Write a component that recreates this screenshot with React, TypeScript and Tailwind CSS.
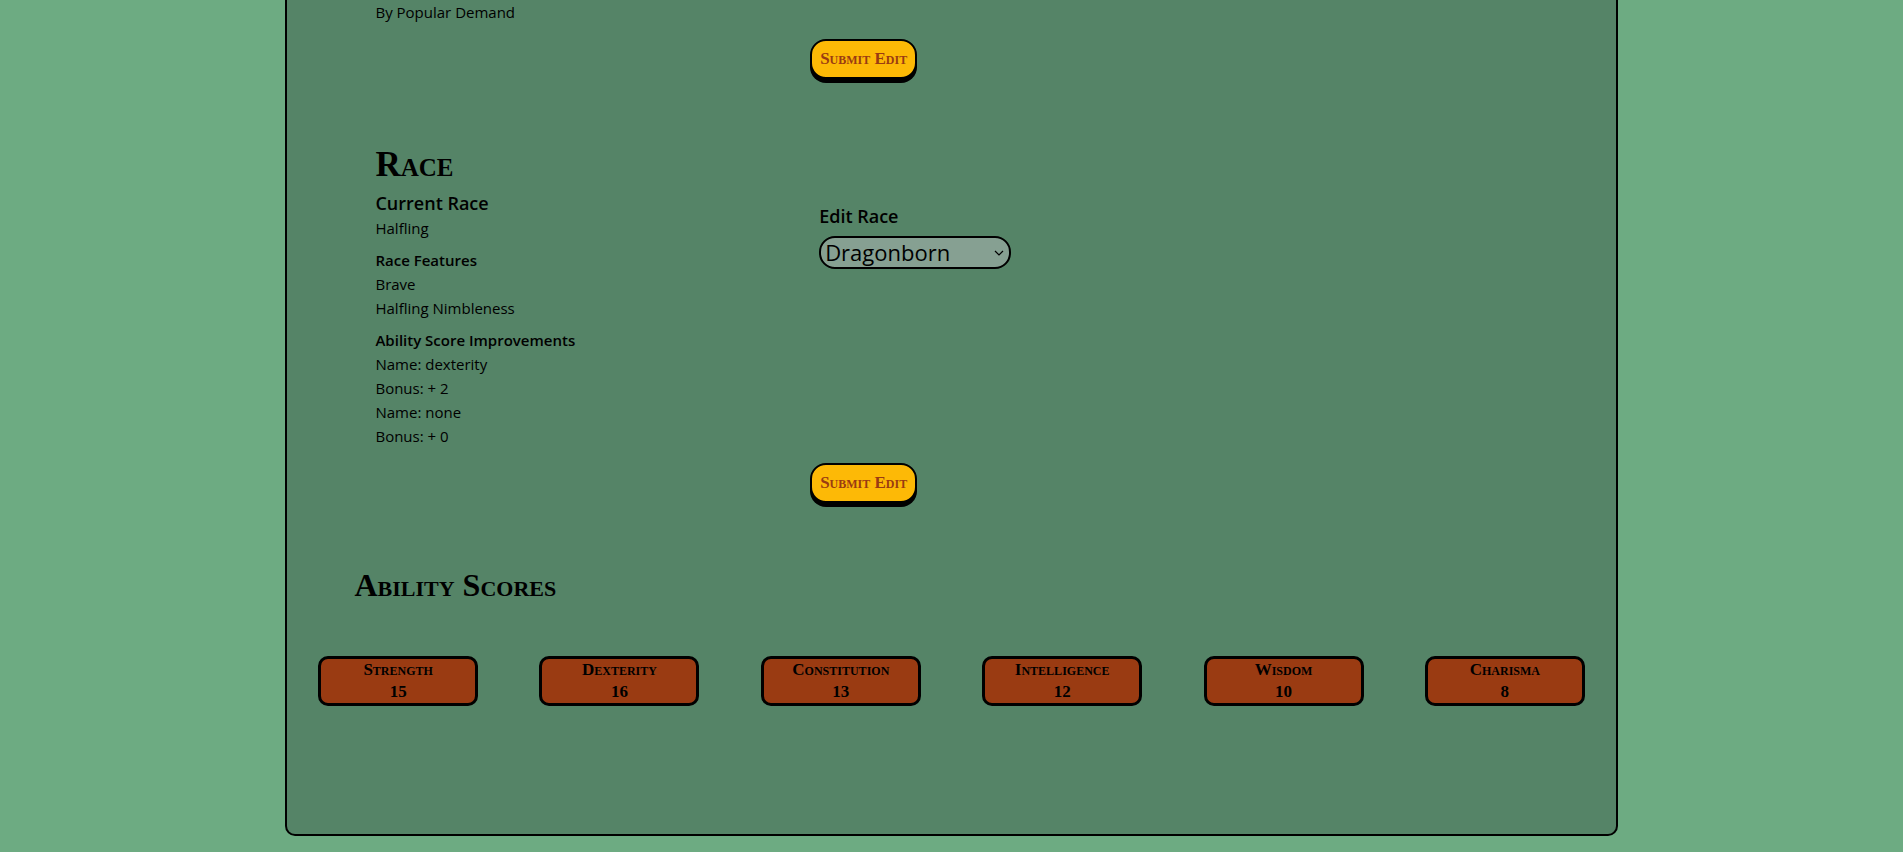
const raceDetails = [
  { title: "Race Features", lines: ["Brave", "Halfling Nimbleness"] },
  {
    title: "Ability Score Improvements",
    lines: ["Name: dexterity", "Bonus: + 2", "Name: none", "Bonus: + 0"],
  },
];

const races = [
  "Dragonborn",
  "Dwarf",
  "Elf",
  "Gnome",
  "Half-Elf",
  "Half-Orc",
  "Halfling",
  "Human",
  "Tiefling",
];

const abilities = [
  { name: "Strength", score: 15 },
  { name: "Dexterity", score: 16 },
  { name: "Constitution", score: 13 },
  { name: "Intelligence", score: 12 },
  { name: "Wisdom", score: 10 },
  { name: "Charisma", score: 8 },
];

function SubmitRow() {
  return (
    <div className="mt-[15px] grid grid-cols-3">
      <div className="col-start-2 pl-20">
        <button
          type="submit"
          className="h-10 rounded-2xl border-2 border-black bg-[#fdb906] px-2 pb-px font-['Liberation_Serif',serif] text-[17px] leading-6 font-bold whitespace-nowrap text-[#9a3b12] shadow-[0_4px_0_#000] [font-variant:small-caps]"
        >
          Submit Edit
        </button>
      </div>
    </div>
  );
}

export default function App() {
  return (
    <div className="min-h-screen bg-[#6dab82] pb-4 font-['Open_Sans',sans-serif] text-[15px] leading-6 text-black">
      <main className="mx-auto w-[70%] rounded-b-[10px] border-2 border-t-0 border-black bg-[#558467] pb-32">
        <form onSubmit={(e) => e.preventDefault()}>
          <p className="pl-22">By Popular Demand</p>
          <SubmitRow />
        </form>

        <form className="mt-16" onSubmit={(e) => e.preventDefault()}>
          <div className="grid grid-cols-3">
            <section className="pl-22">
              <h2 className="font-['Liberation_Serif',serif] text-[35px] leading-[43px] font-bold [font-variant:small-caps]">
                Race
              </h2>
              <h3 className="mt-1 text-lg leading-[26px] font-semibold">Current Race</h3>
              <p>Halfling</p>
              {raceDetails.map((group) => (
                <div key={group.title} className="mt-2">
                  <h4 className="font-semibold">{group.title}</h4>
                  {group.lines.map((line) => (
                    <p key={line}>{line}</p>
                  ))}
                </div>
              ))}
            </section>
            <div className="flex flex-col items-start pt-15 pl-[89px]">
              <label htmlFor="race" className="text-lg leading-[26px] font-semibold">
                Edit Race
              </label>
              <div className="mt-[7px] grid w-48 items-center">
                <select
                  id="race"
                  defaultValue="Dragonborn"
                  className="col-start-1 row-start-1 h-[33px] w-full appearance-none rounded-2xl border-2 border-black bg-[#86a092] pb-px pl-1 text-[22px] leading-7"
                >
                  {races.map((race) => (
                    <option key={race}>{race}</option>
                  ))}
                </select>
                <svg
                  className="pointer-events-none col-start-1 row-start-1 mr-[7px] h-1.5 w-2.5 justify-self-end"
                  viewBox="0 0 10 6"
                  fill="none"
                  stroke="black"
                  strokeWidth="1.2"
                  aria-hidden="true"
                >
                  <path d="M1 1l4 4 4-4" />
                </svg>
              </div>
            </div>
          </div>
          <SubmitRow />
        </form>

        <section className="mt-[62px] font-['Liberation_Serif',serif] font-bold [font-variant:small-caps]">
          <h2 className="pl-[67px] text-[32px] leading-10">Ability Scores</h2>
          <div className="mt-[51px] grid grid-cols-6 justify-items-center">
            {abilities.map((ability) => (
              <div
                key={ability.name}
                className="w-40 rounded-[10px] border-3 border-black bg-[#9a3b12] text-center text-[17px] leading-[22px]"
              >
                <h3>{ability.name}</h3>
                <p>{ability.score}</p>
              </div>
            ))}
          </div>
        </section>
      </main>
    </div>
  );
}
